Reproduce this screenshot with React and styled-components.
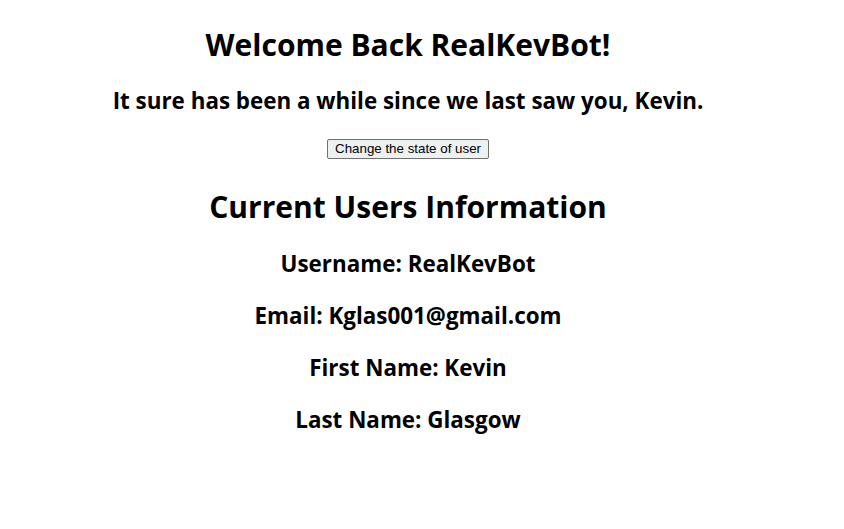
import React, { useState } from 'react';
import styled, { createGlobalStyle } from 'styled-components';

const GlobalStyle = createGlobalStyle`
  body {
    margin: 8px;
    background: #fff;
    color: #000;
    font-family: 'Open Sans', 'Noto Sans', sans-serif;
  }
`;

const users = {
  kevin: {
    username: 'RealKevBot',
    email: 'Kglas001@gmail.com',
    firstName: 'Kevin',
    lastName: 'Glasgow',
  },
};

const Page = styled.div`
  width: 800px;
  text-align: center;
`;

const Title = styled.h1`
  font-size: 30px;
  font-weight: 700;
  line-height: 40px;
  margin: ${({ $top }) => $top}px 0 ${({ $bottom }) => $bottom}px;
`;

const Line = styled.h2`
  font-size: 22.4px;
  font-weight: 700;
  line-height: 32px;
  margin: 19.8px 0;
`;

const ButtonRow = styled.div`
  display: flex;
  justify-content: center;
  margin-top: 22px;
`;

const StateButton = styled.button`
  font-family: 'Liberation Sans', Arial, sans-serif;
  font-size: 13.33px;
  color: #000;
  background: #eef1f1;
  border: 1px solid #707070;
  border-radius: 2px;
  padding: 1px 7px;
  height: 20px;
  cursor: pointer;
`;

const App = () => {
  const [user] = useState(users.kevin);
  const [away, setAway] = useState(true);

  return (
    <Page>
      <GlobalStyle />
      <Title $top={17} $bottom={0}>Welcome Back {user.username}!</Title>
      {away && <Line>It sure has been a while since we last saw you, {user.firstName}.</Line>}
      <ButtonRow>
        <StateButton onClick={() => setAway(!away)}>Change the state of user</StateButton>
      </ButtonRow>
      <Title $top={28.5} $bottom={21}>Current Users Information</Title>
      <Line>Username: {user.username}</Line>
      <Line>Email: {user.email}</Line>
      <Line>First Name: {user.firstName}</Line>
      <Line>Last Name: {user.lastName}</Line>
    </Page>
  );
};

export default App;
